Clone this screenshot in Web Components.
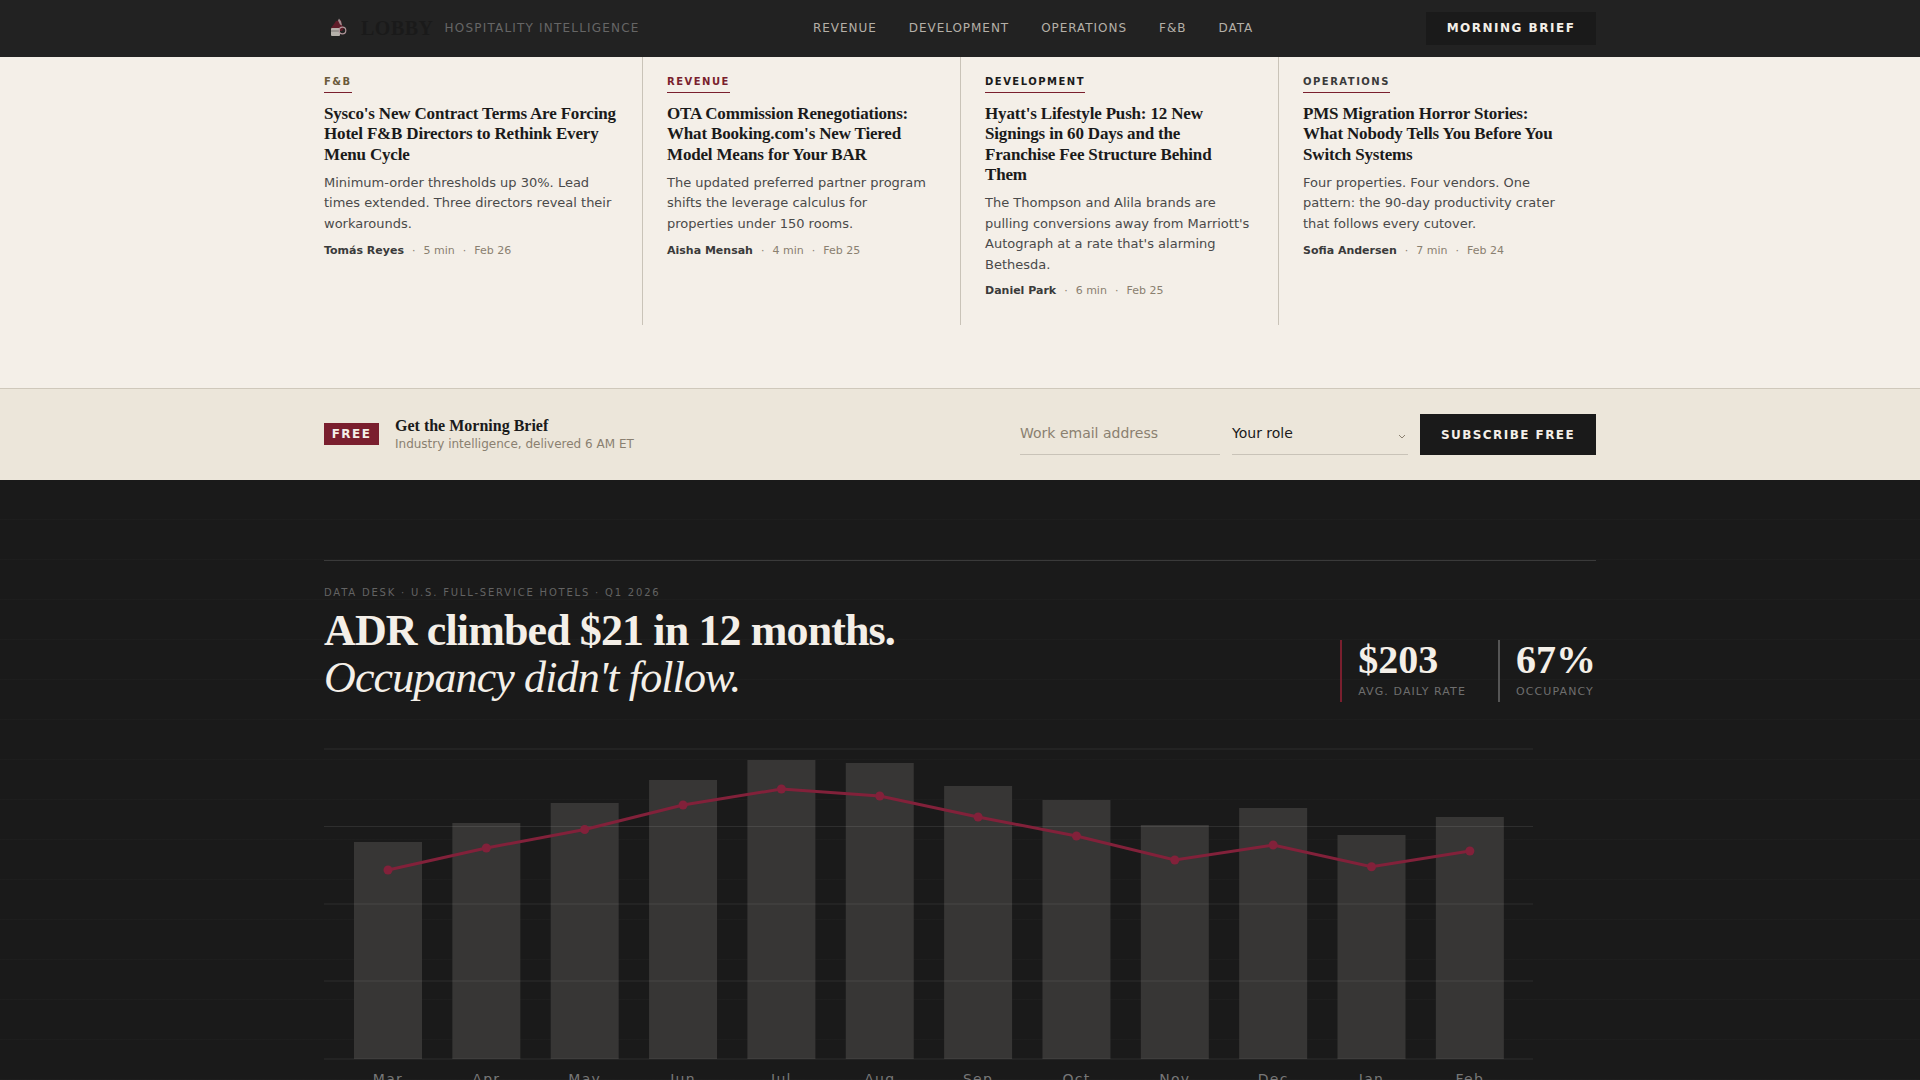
<!DOCTYPE html>
<html lang="en"><head><meta charset="utf-8"><title>Lobby</title>
<style>
html,body{margin:0;padding:0;background:#f4efe8;overflow:hidden}
body{font-family:"DejaVu Sans",sans-serif}
</style></head><body>
<site-header></site-header>
<story-grid>
  <story-card tag="F&amp;B" tone="#6b5a3a" title="Sysco's New Contract Terms Are Forcing Hotel F&amp;B Directors to Rethink Every Menu Cycle" author="Tomás Reyes" mins="5 min" date="Feb 26">Minimum-order thresholds up 30%. Lead times extended. Three directors reveal their workarounds.</story-card>
  <story-card tag="REVENUE" tone="#7a1f2e" title="OTA Commission Renegotiations: What Booking.com's New Tiered Model Means for Your BAR" author="Aisha Mensah" mins="4 min" date="Feb 25">The updated preferred partner program shifts the leverage calculus for properties under 150 rooms.</story-card>
  <story-card tag="DEVELOPMENT" tone="#1a1a1a" title="Hyatt's Lifestyle Push: 12 New Signings in 60 Days and the Franchise Fee Structure Behind Them" author="Daniel Park" mins="6 min" date="Feb 25">The Thompson and Alila brands are pulling conversions away from Marriott's Autograph at a rate that's alarming Bethesda.</story-card>
  <story-card tag="OPERATIONS" tone="#3a3a3a" title="PMS Migration Horror Stories: What Nobody Tells You Before You Switch Systems" author="Sofia Andersen" mins="7 min" date="Feb 24">Four properties. Four vendors. One pattern: the 90-day productivity crater that follows every cutover.</story-card>
</story-grid>
<brief-band></brief-band>
<data-desk></data-desk>
<script>
function def(name, html){
  customElements.define(name, class extends HTMLElement{
    constructor(){super();this.attachShadow({mode:'open'}).innerHTML=typeof html==='function'?html(this):html;}
  });
}
def('site-header',`<style>
:host{display:block;background:#222;height:57px}
.in{box-sizing:border-box;width:1272px;height:56px;margin:0 auto;display:flex;align-items:center}
.brand{display:flex;align-items:center;width:489px}
svg{width:20px;height:22px;margin-left:5px;flex:none;opacity:.85}
.logo{font:700 20px "Liberation Serif",serif;letter-spacing:.5px;color:#1a1a1a;margin-left:12px}
.tag{font-size:12px;letter-spacing:.1em;color:#666;margin-left:11px;white-space:nowrap}
nav{display:flex;gap:32px;font-size:12px;letter-spacing:.08em;color:#b5b0a8;white-space:nowrap}
.btn{margin-left:auto;width:170px;height:33px;background:#1a1a1a;color:#f4efe8;font-size:12px;font-weight:700;letter-spacing:.125em;display:flex;align-items:center;justify-content:center;white-space:nowrap}
</style><div class="in"><div class="brand">
<svg viewBox="0 0 20 22"><path d="M7 4l5-1 1 5 2 3-2 3H3l-1-3 3-4z" fill="#6a1c2b"/><path d="M10 1.500l2 3 1 4-2-1-2-4z" fill="#b9a0a4"/><rect x="2" y="11" width="9" height="8" rx="1" fill="#d0cac4"/><path d="M2 14h9" stroke="#8a8580"/><circle cx="13.500" cy="13.500" r="3.300" fill="none" stroke="#c9a9ae" stroke-width="1.200"/></svg>
<span class="logo">LOBBY</span><span class="tag">HOSPITALITY INTELLIGENCE</span></div>
<nav><span>REVENUE</span><span>DEVELOPMENT</span><span>OPERATIONS</span><span>F&amp;B</span><span>DATA</span></nav>
<div class="btn">MORNING BRIEF</div></div>`);

def('story-grid',`<style>
:host{display:block;background:#f4efe8;height:331px}
.g{width:1272px;height:268px;margin:0 auto;display:grid;grid-template-columns:repeat(4,1fr)}
::slotted(story-card:first-child){--pl:0px;--bw:0px}
</style><div class="g"><slot></slot></div>`);

def('story-card',el=>{
 const a=n=>(el.getAttribute(n)||'').replace(/&/g,'&amp;');
 return `<style>
:host{display:block;box-sizing:border-box;padding:19px 24px 0 var(--pl,24px);border-left:var(--bw,1px) solid #c9c3b8;height:268px}
.t{display:inline-block;font-size:10px;font-weight:700;letter-spacing:.15em;line-height:12px;padding-bottom:4px;border-bottom:1px solid #7a1f2e;color:${a('tone')};margin-bottom:11px;vertical-align:top}
h3{font:700 17px/20.4px "Liberation Serif",serif;letter-spacing:-.01em;color:#1a1a1a;margin:0 0 7.7px}
p{font-size:13px;line-height:20.4px;color:#4a4a4a;margin:0 0 8.5px}
.m{font-size:11px;color:#8a8070;display:flex;gap:8px;line-height:16px}
b{color:#3a3a3a;font-weight:700}
</style><div class="t">${a('tag')}</div><h3>${a('title')}</h3><p><slot></slot></p><div class="m"><b>${a('author')}</b><span>·</span><span>${a('mins')}</span><span>·</span><span>${a('date')}</span></div>`;
});

def('brief-band',`<style>
:host{display:block;box-sizing:border-box;height:92px;background:#ece6da;border-top:1px solid #cfc8bb}
.in{width:1272px;height:91px;margin:0 auto;display:flex;align-items:center}
.free{background:#7a1f2e;color:#f4efe8;font-size:12px;font-weight:700;letter-spacing:.12em;width:55px;height:22px;display:flex;align-items:center;justify-content:center;margin:-1px 16px 0 0}
.tt{font:700 16px/18px "Liberation Serif",serif;color:#1a1a1a;margin-top:-1px}
.st{font-size:12px;line-height:16px;color:#8a8070;margin-top:1px}
form{margin-left:auto;display:flex;gap:12px;align-items:flex-end}
.f{box-sizing:border-box;height:41px;border-bottom:1px solid #c9c3b8;font-size:14px;padding-top:11px}
.e{width:200px;color:#8a8070}
.s{width:176px;color:#1a1a1a;position:relative}
.s svg{position:absolute;right:2px;top:20px}
.b{width:176px;height:41px;background:#1a1a1a;color:#f4efe8;font-size:12px;font-weight:700;letter-spacing:.12em;display:flex;align-items:center;justify-content:center}
</style><div class="in"><div class="free">FREE</div><div><div class="tt">Get the Morning Brief</div><div class="st">Industry intelligence, delivered 6 AM ET</div></div>
<form onsubmit="return false"><div class="f e">Work email address</div><div class="f s">Your role<svg width="8" height="5" viewBox="0 0 8 5"><path d="M1 1l3 3 3-3" fill="none" stroke="#8a8070"/></svg></div><div class="b">SUBSCRIBE FREE</div></form></div>`);

def('data-desk',()=>{
 const M=['Mar','Apr','May','Jun','Jul','Aug','Sep','Oct','Nov','Dec','Jan','Feb'];
 const tops=[842,823,803,780,760,763,786,800,825,808,835,817];
 const pts=[870,848,829.5,805,789,796,817,836,860,845,866.7,851];
 const base=1059, y0=740, line='#82213a';
 const cx=i=>64+i*98.35;
 let s='';
 tops.forEach((t,i)=>{s+=`<rect x="${cx(i)-34}" y="${t-y0}" width="68" height="${base-t}" fill="#373635"/>`;});
 [749,826.5,904,981,1059].forEach(y=>{s+=`<line x1="0" x2="1209" y1="${y-y0}" y2="${y-y0}" stroke="#fff" stroke-opacity=".09"/>`;});
 s+=`<polyline fill="none" stroke="${line}" stroke-width="3" points="${pts.map((p,i)=>cx(i)+','+(p-y0)).join(' ')}"/>`;
 pts.forEach((p,i)=>{s+=`<circle cx="${cx(i)}" cy="${p-y0}" r="4.500" fill="${line}"/>`;});
 M.forEach((m,i)=>{s+=`<text x="${cx(i)}" y="${1084.2-y0}" text-anchor="middle" font-size="14" letter-spacing="1.300" fill="#777">${m}</text>`;});
 return `<style>
:host{display:block;height:700px;background-color:#1a1a1a;background-image:repeating-linear-gradient(180deg,transparent 0 39px,rgba(255,255,255,.016) 39px 40px)}
.in{width:1272px;margin:0 auto;padding-top:80px}
.rule{height:1px;background:#3a3a3a}
.top{display:flex;justify-content:space-between;align-items:flex-end;margin-top:26px}
.k{font-size:10px;letter-spacing:.18em;color:#636363;line-height:12px;margin-bottom:8px}
h2{font:700 44px/48px "Liberation Serif",serif;letter-spacing:-.02em;color:#f4efe8;margin:0 0 1px}
em{font-weight:400;display:block;margin-top:-1px}
.stats{display:flex;margin-bottom:1px}
.st{border-left:2px solid #7a1f2e;padding-left:16px;height:62px;margin-right:32px}
.st.o{border-color:#555;margin-right:0}
.n{font:700 40px/40px "Liberation Serif",serif;color:#f4efe8}
.l{font-size:11px;letter-spacing:.1em;color:#6e6e6e;line-height:14px;margin-top:5px;white-space:nowrap}
svg{display:block;width:1272px;height:360px;overflow:visible;margin-top:37px}
text{font-family:"DejaVu Sans",sans-serif}
</style><div class="in"><div class="rule"></div><div class="top"><div><div class="k">DATA DESK · U.S. FULL-SERVICE HOTELS · Q1 2026</div><h2>ADR climbed $21 in 12 months.<em>Occupancy didn't follow.</em></h2></div>
<div class="stats"><div class="st"><div class="n">$203</div><div class="l">AVG. DAILY RATE</div></div><div class="st o"><div class="n">67%</div><div class="l">OCCUPANCY</div></div></div></div>
<svg viewBox="0 0 1272 360">${s}</svg></div>`;
});
</script>
</body></html>
